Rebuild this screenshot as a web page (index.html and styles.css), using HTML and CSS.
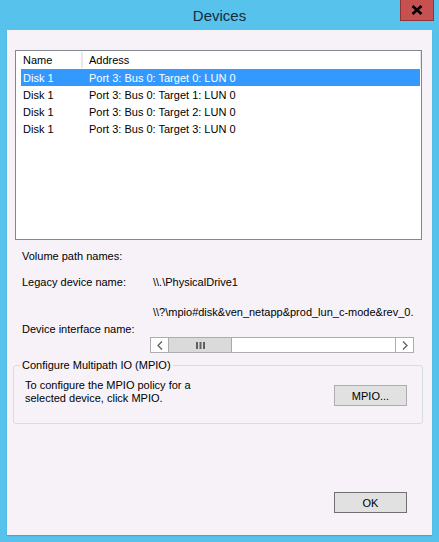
FILE: index.html
```html
<!DOCTYPE html>
<html lang="en">
<head>
  <meta charset="UTF-8" />
  <title>Devices</title>
  <link rel="stylesheet" href="styles.css">
</head>
<body>
  <div class="window">
    <div class="titlebar">
      <span class="title">Devices</span>
      <button class="close" aria-label="Close">
        <svg width="12" height="10" viewBox="0 0 12 10"><path d="M1.5 1 L10.5 9 M10.5 1 L1.5 9" stroke="#000" stroke-width="2.6"/></svg>
      </button>
    </div>

    <div class="client">
      <div class="listbox">
        <div class="list-header">
          <div class="col-name">Name</div>
          <div class="col-addr">Address</div>
        </div>
        <div class="row selected"><span class="col-name">Disk 1</span><span class="col-addr">Port 3: Bus 0: Target 0: LUN 0</span></div>
        <div class="row"><span class="col-name">Disk 1</span><span class="col-addr">Port 3: Bus 0: Target 1: LUN 0</span></div>
        <div class="row"><span class="col-name">Disk 1</span><span class="col-addr">Port 3: Bus 0: Target 2: LUN 0</span></div>
        <div class="row"><span class="col-name">Disk 1</span><span class="col-addr">Port 3: Bus 0: Target 3: LUN 0</span></div>
      </div>

      <div class="fields">
        <div class="field-label">Volume path names:</div>
        <div class="field">
          <span class="field-label">Legacy device name:</span>
          <span class="field-value">\\.\PhysicalDrive1</span>
        </div>
        <div class="field">
          <span class="field-label">Device interface name:</span>
          <div class="field-value">
            <div>\\?\mpio#disk&amp;ven_netapp&amp;prod_lun_c-mode&amp;rev_0.</div>
            <div class="hscroll">
              <span class="arrow">
                <svg width="6" height="9" viewBox="0 0 6 9"><path d="M5 0.5 L1 4.5 L5 8.5" fill="none" stroke="#606060" stroke-width="1.3"/></svg>
              </span>
              <span class="thumb">
                <svg width="9" height="7" viewBox="0 0 9 7"><path d="M1 0 V7 M4.5 0 V7 M8 0 V7" stroke="#606060" stroke-width="2"/></svg>
              </span>
              <span class="track"></span>
              <span class="arrow">
                <svg width="6" height="9" viewBox="0 0 6 9"><path d="M1 0.5 L5 4.5 L1 8.5" fill="none" stroke="#606060" stroke-width="1.3"/></svg>
              </span>
            </div>
          </div>
        </div>
      </div>

      <fieldset class="group">
        <legend>Configure Multipath IO (MPIO)</legend>
        <p class="group-text">To configure the MPIO policy for a<br>selected device, click MPIO.</p>
        <button class="btn">MPIO...</button>
      </fieldset>

      <div class="footer">
        <button class="btn default">OK</button>
      </div>
    </div>
  </div>
</body>
</html>
```

FILE: styles.css
```css
:root {
  --frame: #57c2ec;
  --client: #f6f2f8;
  --select: #3399ff;
  --text: #000000;
}

body {
  margin: 0;
  padding: 0;
  font-family: "Liberation Sans", Arial, sans-serif;
  font-size: 11px;
  color: var(--text);
}

.window {
  width: 439px;
  height: 542px;
  background: var(--frame);
  display: flex;
  flex-direction: column;
}

.titlebar {
  height: 30px;
  display: flex;
  justify-content: center;
  align-items: center;
  position: relative;
}

.title {
  font-size: 15px;
  color: #1a2a3a;
  margin-top: 1px;
}

.close {
  position: absolute;
  top: 0;
  right: 5px;
  width: 34px;
  height: 21px;
  background: #c75050;
  border: 1px solid #8e3434;
  border-top: none;
  padding: 0;
  display: flex;
  align-items: center;
  justify-content: center;
}

.client {
  margin: 0 7px;
  height: 505px;
  background: var(--client);
  box-shadow: 0 1px 1px rgba(0, 0, 0, 0.15);
  display: flex;
  flex-direction: column;
}

/* device list */
.listbox {
  margin: 20px 10px 0 8px;
  height: 190px;
  box-sizing: border-box;
  border: 1px solid #828790;
  background: #ffffff;
}

.list-header {
  display: flex;
  height: 18px;
  line-height: 18px;
  padding-top: 1px;
  box-sizing: border-box;
  border-right: 1px solid #e5e5e5;
}

.list-header .col-name {
  width: 67px;
  padding-left: 7px;
  box-sizing: border-box;
  border-right: 2px solid #e8e8e8;
  height: 16px;
  line-height: 17px;
}

.list-header .col-addr {
  padding-left: 6px;
  line-height: 17px;
}

.row {
  display: flex;
  height: 17px;
  line-height: 18px;
  margin: 0 1px 0 5px;
}

.row .col-name {
  width: 67px;
  padding-left: 2px;
  box-sizing: border-box;
}

.row .col-addr {
  padding-left: 1px;
}

.row.selected {
  background: var(--select);
  color: #ffffff;
}

/* path names */
.fields {
  margin: 10px 0 0 15px;
  display: flex;
  flex-direction: column;
  gap: 13px;
}

.field-label {
  line-height: 13px;
}

.field {
  display: flex;
  align-items: center;
}

.field .field-label {
  width: 131px;
  flex-shrink: 0;
}

.field-value {
  line-height: 13px;
}

.field:last-child {
  margin-top: 4px;
}

.hscroll {
  display: flex;
  width: 264px;
  height: 16px;
  box-sizing: border-box;
  border: 1px solid #adadad;
  background: #ffffff;
  margin: 18px 0 0 -3px;
}

.arrow {
  width: 17px;
  display: flex;
  align-items: center;
  justify-content: center;
}

.arrow:first-child {
  border-right: 1px solid #adadad;
}

.arrow:last-child {
  border-left: 1px solid #adadad;
}

.thumb {
  width: 62px;
  background: #dadada;
  border-right: 1px solid #a9a9a9;
  display: flex;
  align-items: center;
  justify-content: center;
}

.track {
  flex: 1;
}

/* MPIO group */
.group {
  margin: 6px 9px 0 6px;
  padding: 0 15px 0 11px;
  height: 65px;
  box-sizing: border-box;
  border: 1px solid #d8dde3;
  border-radius: 3px;
  display: flex;
  justify-content: space-between;
  align-items: flex-start;
}

.group legend {
  padding: 0 2px;
  margin-left: -5px;
  line-height: 13px;
}

.group-text {
  margin: 7px 0 0 0;
  line-height: 13px;
}

.btn {
  width: 73px;
  height: 21px;
  font-family: inherit;
  font-size: 11px;
  background: #e1e1e1;
  border: 1px solid #adadad;
  padding: 0;
  color: var(--text);
}

.group .btn {
  margin-top: 13px;
}

.btn.default {
  border-color: #707070;
}

.footer {
  margin-top: auto;
  display: flex;
  justify-content: flex-end;
  padding: 0 25px 22px 0;
}
```
